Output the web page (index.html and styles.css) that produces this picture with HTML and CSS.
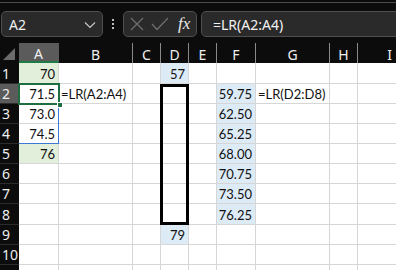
FILE: index.html
```html
<!DOCTYPE html>
<html lang="en">
<head>
  <meta charset="UTF-8" />
  <meta name="viewport" content="width=device-width, initial-scale=1" />
  <title>LR sheet</title>
  <link rel="stylesheet" href="styles.css">
</head>
<body>

  <div class="edge"></div>

  <div class="formula-bar">
    <div class="name-box">
      <span>A2</span>
      <svg class="chevron" width="12" height="8" viewBox="0 0 12 8">
        <path d="M1 1.5 L6 6.5 L11 1.5" fill="none" stroke="#c8c8c8" stroke-width="1.2"/>
      </svg>
    </div>
    <div class="grip">
      <i></i><i></i><i></i>
    </div>
    <div class="fx-box">
      <svg width="16" height="16" viewBox="0 0 16 16">
        <path d="M2 2 L14 14 M14 2 L2 14" stroke="#6f6f6f" stroke-width="1.2" fill="none"/>
      </svg>
      <svg width="18" height="14" viewBox="0 0 18 14">
        <path d="M1 7 L6 12.5 L17 1" stroke="#6f6f6f" stroke-width="1.2" fill="none"/>
      </svg>
      <span class="fx">fx</span>
    </div>
    <div class="formula-input">=LR(A2:A4)</div>
  </div>

  <div class="sheet" id="sheet">
    <div class="range-ref"></div>
    <div class="selection"><span class="handle"></span></div>
    <div class="thick-box"></div>
  </div>

  <script>
    const cols = ['A', 'B', 'C', 'D', 'E', 'F', 'G', 'H', 'I'];
    const rows = 11;

    const cells = {
      A1: { v: '70', tint: 'green' },
      A2: { v: '71.5' },
      A3: { v: '73.0' },
      A4: { v: '74.5' },
      A5: { v: '76', tint: 'green' },
      B2: { v: '=LR(A2:A4)', text: true },
      D1: { v: '57', tint: 'blue' },
      D9: { v: '79', tint: 'blue' },
      F2: { v: '59.75', tint: 'blue' },
      F3: { v: '62.50', tint: 'blue' },
      F4: { v: '65.25', tint: 'blue' },
      F5: { v: '68.00', tint: 'blue' },
      F6: { v: '70.75', tint: 'blue' },
      F7: { v: '73.50', tint: 'blue' },
      F8: { v: '76.25', tint: 'blue' },
      G2: { v: '=LR(D2:D8)', text: true },
    };

    const sheet = document.getElementById('sheet');

    function add(cls, text) {
      const el = document.createElement('div');
      el.className = cls;
      if (text) el.textContent = text;
      sheet.appendChild(el);
      return el;
    }

    // header row
    const corner = add('corner');
    corner.innerHTML = '<span class="select-all"></span>';
    cols.forEach(c => add(c === 'A' ? 'col-head active' : 'col-head', c));

    // body rows (last one sits below the fold, so no label)
    for (let r = 1; r <= rows; r++) {
      add(r === 2 ? 'row-head active' : 'row-head', r < rows ? String(r) : '');
      cols.forEach(c => {
        const data = cells[c + r];
        let cls = 'cell';
        if (data && data.tint) cls += ' tint-' + data.tint;
        if (data && data.text) cls += ' text';
        add(cls, data ? data.v : '');
      });
    }
  </script>

</body>
</html>
```

FILE: styles.css
```css
* {
  box-sizing: border-box;
  margin: 0;
  padding: 0;
}

body {
  background: #0c0c0c;
  font-family: 'Noto Sans', 'Open Sans', sans-serif;
  color: #f2f2f2;
  overflow: hidden;
  width: 396px;
  height: 270px;
}

.edge {
  height: 3px;
  border-bottom: 1px solid #4b4b4b;
}

/* formula bar */
.formula-bar {
  display: flex;
  align-items: stretch;
  height: 40px;
  padding: 8px 0 6px 1px;
}

.name-box {
  width: 102px;
  display: flex;
  align-items: center;
  justify-content: space-between;
  padding: 0 6px 0 7px;
  background: #2a2a2a;
  border: 1px solid #4f4f4f;
  border-radius: 5px;
  font-size: 14px;
}

.chevron {
  margin-top: 1px;
}

.grip {
  width: 20px;
  display: flex;
  flex-direction: column;
  align-items: center;
  justify-content: center;
  gap: 2px;
}

.grip i {
  width: 2px;
  height: 2px;
  background: #bdbdbd;
}

.fx-box {
  width: 74px;
  display: flex;
  align-items: center;
  gap: 6px;
  padding-left: 5px;
  background: #2a2a2a;
  border: 1px solid #4f4f4f;
  border-radius: 5px;
}

.fx {
  font-family: 'Liberation Serif', serif;
  font-style: italic;
  font-size: 17px;
  color: #e8e8e8;
  margin-left: 3px;
}

.formula-input {
  flex: 1;
  margin-left: 4px;
  margin-right: -10px;
  display: flex;
  align-items: center;
  padding-left: 11px;
  background: #2a2a2a;
  border: 1px solid #4f4f4f;
  border-radius: 5px;
  font-size: 14px;
}

/* sheet grid */
.sheet {
  position: relative;
  display: grid;
  grid-template-columns: 19px 40px 74px 28px 28px 28px 39px 74px 28px 64px;
  grid-template-rows: 20px 21px 20px 20px 20px 20px 20px 20px 21px 20px 20px 20px;
}

.corner {
  background: #0c0c0c;
  position: relative;
}

.select-all {
  position: absolute;
  left: 3px;
  bottom: 3px;
  width: 0;
  height: 0;
  border-left: 12px solid transparent;
  border-bottom: 12px solid #6b6b6b;
}

.col-head {
  display: flex;
  align-items: center;
  justify-content: center;
  background: #0c0c0c;
  border-right: 1px solid #8a8a8a;
  font-size: 14px;
  color: #f0f0f0;
  padding-top: 2px;
}

.col-head.active {
  background: #5b5b5b;
  border-bottom: 2px solid #1f7a45;
  border-right-color: #5b5b5b;
}

.row-head {
  display: flex;
  align-items: center;
  padding-left: 2px;
  background: #0c0c0c;
  border-bottom: 1px solid #2c2c2c;
  font-size: 14px;
  color: #f0f0f0;
}

.row-head.active {
  background: #5b5b5b;
}

.cell {
  display: flex;
  align-items: flex-end;
  justify-content: flex-end;
  padding: 0 3px 1px 0;
  background: #fff;
  border-right: 1px solid #d6d6d6;
  border-bottom: 1px solid #d6d6d6;
  font-family: 'Lato', sans-serif;
  font-size: 13px;
  line-height: 16px;
  color: #111;
  white-space: nowrap;
}

.cell.text {
  justify-content: flex-start;
  padding: 0 0 1px 2px;
  overflow: visible;
  position: relative;
  z-index: 1;
}

.tint-green {
  background: #e2efda;
}

.tint-blue {
  background: #ddebf7;
}

/* overlays */
.selection {
  position: absolute;
  left: 18px;
  top: 40px;
  width: 42px;
  height: 22px;
  border: 2px solid #1e6e42;
  z-index: 3;
}

.handle {
  position: absolute;
  right: -5px;
  bottom: -5px;
  width: 6px;
  height: 6px;
  background: #1e6e42;
  border: 1px solid #fff;
}

.range-ref {
  position: absolute;
  left: 19px;
  top: 60px;
  width: 40px;
  height: 41px;
  border-right: 1px solid #3b78d8;
  border-bottom: 1px solid #3b78d8;
  z-index: 2;
}

.thick-box {
  position: absolute;
  left: 160px;
  top: 41px;
  width: 29px;
  height: 141px;
  border: 3px solid #000;
  z-index: 2;
}
```
